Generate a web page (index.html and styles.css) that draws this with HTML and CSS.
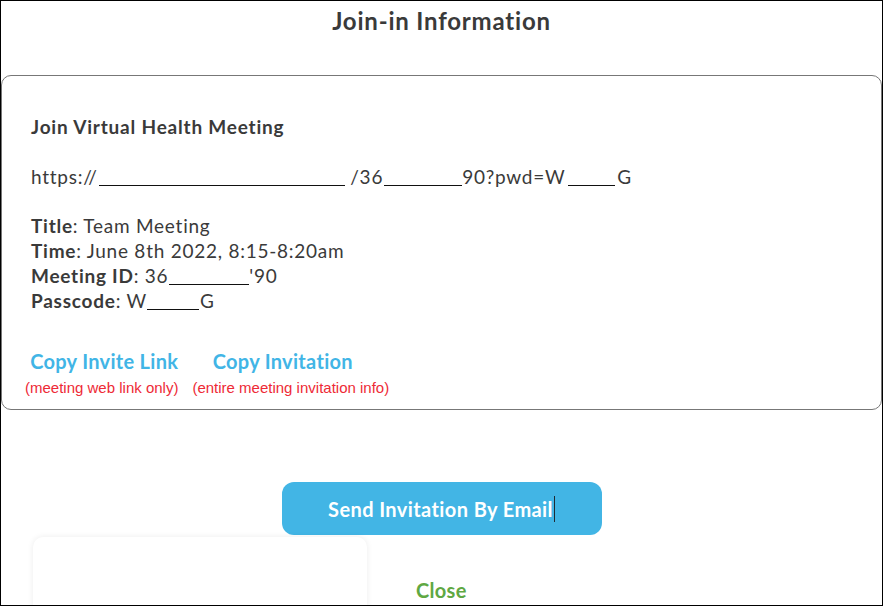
FILE: index.html
```html
<!DOCTYPE html>
<html>
<head>
<meta charset="utf-8">
<link rel="stylesheet" href="styles.css">
</head>
<body>
<div class="frame">
  <h1 class="title">Join-in Information</h1>
  <div class="card">
    <h2 class="card-heading">Join Virtual Health Meeting</h2>
    <p class="url">https://<span class="blank b-host"></span> /36<span class="blank b-id"></span>90?pwd=W<span class="blank b-pwd"></span>G</p>
    <div class="details">
      <div><b>Title</b>: Team Meeting</div>
      <div><b>Time</b>: June 8th 2022, 8:15-8:20am</div>
      <div><b>Meeting ID</b>: 36<span class="blank b-mid"></span>'90</div>
      <div><b>Passcode</b>: W<span class="blank b-pass"></span>G</div>
    </div>
    <div class="actions">
      <div class="action">
        <a class="copy copy-link">Copy Invite Link</a>
        <span class="hint">(meeting web link only)</span>
      </div>
      <div class="action">
        <a class="copy copy-invite">Copy Invitation</a>
        <span class="hint">(entire meeting invitation info)</span>
      </div>
    </div>
  </div>
  <div class="send-row">
    <button class="send">Send Invitation By Email<span class="caret"></span></button>
  </div>
  <div class="bottom-row">
    <div class="panel"></div>
    <a class="close">Close</a>
  </div>
</div>
</body>
</html>
```

FILE: styles.css
```css
html, body {
  margin: 0;
  padding: 0;
  background: #fff;
}
body {
  font-family: "Lato", "Open Sans", sans-serif;
  color: #3a3a3a;
}
.frame {
  box-sizing: border-box;
  width: 883px;
  height: 606px;
  border: 1px solid #000;
  overflow: hidden;
  display: flex;
  flex-direction: column;
}
.frame > * {
  flex-shrink: 0;
}
.title {
  margin: 6px 0 0;
  text-align: center;
  font-size: 24px;
  letter-spacing: 0.8px;
  font-weight: 700;
  line-height: 28px;
  color: #3a3a3a;
}
.card {
  margin-top: 40px;
  border: 1px solid #777;
  border-radius: 10px;
  padding: 38px 29px 11px;
  height: 335px;
  box-sizing: border-box;
}
.card-heading {
  margin: 0;
  font-size: 19px;
  letter-spacing: 0.8px;
  font-weight: 700;
  line-height: 26px;
  color: #3a3a3a;
}
.url {
  margin: 24px 0 0;
  font-size: 19px;
  letter-spacing: 0.75px;
  line-height: 26px;
}
.blank {
  display: inline-block;
  border-bottom: 1px solid #111;
  vertical-align: baseline;
  height: 0;
  position: relative;
  top: 2px;
}
.b-host { width: 246px; margin-left: 1px; }
.b-id { width: 78px; margin-left: 1px; }
.b-pwd { width: 47px; margin-left: 3px; margin-right: 2px; }
.b-mid { width: 80px; margin-left: 1px; }
.b-pass { width: 52px; margin-right: 1px; }
.details {
  margin-top: 23px;
  font-size: 19px;
  letter-spacing: 0.75px;
  line-height: 25px;
}
.details b {
  font-weight: 700;
}
.actions {
  display: flex;
  gap: 14px;
  margin-top: 36px;
  margin-left: -6px;
}
.action {
  display: flex;
  flex-direction: column;
  align-items: center;
}
.copy {
  color: #41b5e6;
  font-weight: 700;
  font-size: 20px;
  letter-spacing: 0.3px;
  line-height: 24px;
}
.copy-link {
  margin-left: 5px;
}
.copy-invite {
  margin-right: 16px;
}
.hint {
  margin-top: 6px;
  color: #ee2a36;
  font-family: "Liberation Sans", Arial, sans-serif;
  font-size: 15px;
  line-height: 18px;
}
.send-row {
  display: flex;
  justify-content: center;
  margin-top: 72px;
}
.send {
  width: 320px;
  height: 53px;
  border: none;
  border-radius: 12px;
  background: #42b5e5;
  color: #fff;
  font-family: "Lato", "Open Sans", sans-serif;
  font-weight: 700;
  font-size: 20px;
  letter-spacing: 0.4px;
  display: flex;
  align-items: center;
  justify-content: center;
  padding: 0;
}
.caret {
  display: inline-block;
  width: 0;
  height: 26px;
  border-left: 1.5px solid #1f2a33;
  margin-left: 1px;
}
.bottom-row {
  display: flex;
  align-items: flex-start;
  margin-top: 2px;
}
.panel {
  margin-left: 32px;
  width: 334px;
  height: 120px;
  border-radius: 10px;
  background: #fff;
  box-shadow: 0 0 6px rgba(0,0,0,0.08);
}
.close {
  margin-left: 49px;
  margin-top: 41px;
  color: #5fa843;
  font-weight: 700;
  font-size: 20px;
  letter-spacing: 0.3px;
  line-height: 24px;
}
```
